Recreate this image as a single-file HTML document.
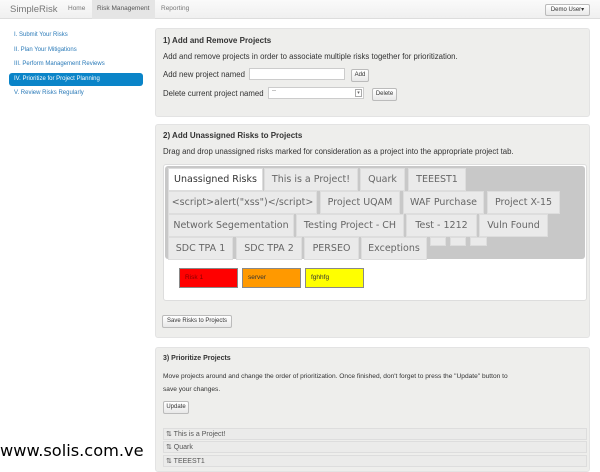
<!DOCTYPE html>
<html><head><meta charset="utf-8"><style>
*{margin:0;padding:0;box-sizing:border-box}
body{width:600px;height:465px;overflow:hidden;background:#fff;font-family:"Liberation Sans",sans-serif;position:relative;color:#333}
.a{position:absolute;white-space:nowrap}
.nav{left:0;top:0;width:600px;height:19px;background:linear-gradient(#fafafa,#f0f0f0);border-bottom:1px solid #ddd}
.btn{position:absolute;background:linear-gradient(#fff,#e8e8e8);border:1px solid #bbb;font-size:6px;color:#333;text-align:center;border-radius:2px}
.side{font-size:6px;color:#2a7ab8}
.panel{background:#eeeeec;border:1px solid #e3e3e3;border-radius:3px;left:155px;width:435px}
.h{font-size:8px;font-weight:bold;color:#333}
.t{font-size:7.8px;color:#333}
.tab{position:absolute;height:23px;background:#eaeaea;border:1px solid #ddd;font-family:"DejaVu Sans",sans-serif;font-size:9.5px;color:#666;line-height:22px;text-align:center}
.risk{position:absolute;top:268px;height:20px;border:1px solid #888;font-size:6.5px;line-height:18px;padding-left:5px}
.li{position:absolute;left:163px;width:424px;height:12px;background:#ebebea;border:1px solid #ddd;font-size:7px;color:#555;line-height:11px;padding-left:2px}
</style></head><body>
<div class="a nav"></div>
<div class="a" style="left:10px;top:4px;font-size:9.5px;color:#777">SimpleRisk</div>
<div class="a" style="left:68px;top:5px;font-size:6.5px;color:#777">Home</div>
<div class="a" style="left:92px;top:0;width:63px;height:19px;background:#e5e5e5"></div>
<div class="a" style="left:97px;top:5px;font-size:6.5px;color:#555">Risk Management</div>
<div class="a" style="left:161px;top:5px;font-size:6.5px;color:#777">Reporting</div>
<div class="btn" style="left:545px;top:4px;width:45px;height:12px;line-height:10px">Demo User▾</div>

<div class="a side" style="left:14px;top:32px">I. Submit Your Risks</div>
<div class="a side" style="left:14px;top:47px">II. Plan Your Mitigations</div>
<div class="a side" style="left:14px;top:61px">III. Perform Management Reviews</div>
<div class="a" style="left:9px;top:73px;width:134px;height:13px;background:#0a84c8;border-radius:3px"></div>
<div class="a side" style="left:14px;top:76px;color:#fff">IV. Prioritize for Project Planning</div>
<div class="a side" style="left:14px;top:90px">V. Review Risks Regularly</div>

<div class="a panel" style="top:28px;height:89px"></div>
<div class="a h" style="left:163px;top:36px">1) Add and Remove Projects</div>
<div class="a t" style="left:163px;top:52px">Add and remove projects in order to associate multiple risks together for prioritization.</div>
<div class="a t" style="left:163px;top:70px">Add new project named</div>
<div class="a" style="left:249px;top:68px;width:96px;height:12px;background:#fff;border:1px solid #ccc"></div>
<div class="btn" style="left:351px;top:69px;width:18px;height:13px;line-height:11px">Add</div>
<div class="a t" style="left:163px;top:89px">Delete current project named</div>
<div class="a" style="left:268px;top:87px;width:96px;height:12px;background:#fff;border:1px solid #ccc;font-size:6px;padding-left:3px;color:#666">--<span style="position:absolute;right:1px;top:1px;width:7px;height:8px;border:1px solid #aaa;font-size:5px;line-height:7px;text-align:center">▾</span></div>
<div class="btn" style="left:372px;top:88px;width:25px;height:13px;line-height:11px">Delete</div>

<div class="a panel" style="top:124px;height:214px"></div>
<div class="a h" style="left:163px;top:131px">2) Add Unassigned Risks to Projects</div>
<div class="a t" style="left:163px;top:147px">Drag and drop unassigned risks marked for consideration as a project into the appropriate project tab.</div>
<div class="a" style="left:163px;top:164px;width:424px;height:137px;background:#fff;border:1px solid #ddd;border-radius:3px"></div>
<div class="a" style="left:165px;top:166px;width:420px;height:93px;background:#c8c8c8;border-radius:3px"></div>
<div class="tab" style="left:168px;top:168px;width:95px;background:#fff;color:#333">Unassigned Risks</div>
<div class="tab" style="left:264px;top:168px;width:94px">This is a Project!</div>
<div class="tab" style="left:360px;top:168px;width:45px">Quark</div>
<div class="tab" style="left:408px;top:168px;width:58px">TEEEST1</div>
<div class="tab" style="left:168px;top:191px;width:149px">&lt;script&gt;alert("xss")&lt;/script&gt;</div>
<div class="tab" style="left:320px;top:191px;width:80px">Project UQAM</div>
<div class="tab" style="left:403px;top:191px;width:81px">WAF Purchase</div>
<div class="tab" style="left:487px;top:191px;width:73px">Project X-15</div>
<div class="tab" style="left:168px;top:214px;width:126px">Network Segementation</div>
<div class="tab" style="left:296px;top:214px;width:108px">Testing Project - CH</div>
<div class="tab" style="left:406px;top:214px;width:71px">Test - 1212</div>
<div class="tab" style="left:479px;top:214px;width:69px">Vuln Found</div>
<div class="tab" style="left:168px;top:237px;width:65px">SDC TPA 1</div>
<div class="tab" style="left:236px;top:237px;width:66px">SDC TPA 2</div>
<div class="tab" style="left:304px;top:237px;width:55px">PERSEO</div>
<div class="tab" style="left:361px;top:237px;width:66px">Exceptions</div>
<div class="tab" style="left:430px;top:237px;width:16px;height:9px"></div>
<div class="tab" style="left:450px;top:237px;width:16px;height:9px"></div>
<div class="tab" style="left:470px;top:237px;width:17px;height:9px"></div>
<div class="risk" style="left:179px;width:59px;background:#f00;color:#800">Risk 1</div>
<div class="risk" style="left:242px;width:59px;background:#f90">server</div>
<div class="risk" style="left:305px;width:59px;background:#ff0">fghhfg</div>
<div class="btn" style="left:162px;top:315px;width:70px;height:13px;line-height:11px">Save Risks to Projects</div>

<div class="a panel" style="top:347px;height:125px"></div>
<div class="a h" style="left:163px;top:355px;font-size:7px">3) Prioritize Projects</div>
<div class="a t" style="left:163px;top:373px;font-size:6.6px">Move projects around and change the order of prioritization. Once finished, don't forget to press the "Update" button to</div>
<div class="a t" style="left:163px;top:386px;font-size:6.6px">save your changes.</div>
<div class="btn" style="left:163px;top:401px;width:26px;height:13px;line-height:11px">Update</div>
<div class="li" style="top:428px">⇅ This is a Project!</div>
<div class="li" style="top:441px">⇅ Quark</div>
<div class="li" style="top:455px">⇅ TEEEST1</div>
<div class="a" style="left:0;top:441px;font-family:'DejaVu Sans',sans-serif;font-size:16.2px;color:#000">www.solis.com.ve</div>
</body></html>
